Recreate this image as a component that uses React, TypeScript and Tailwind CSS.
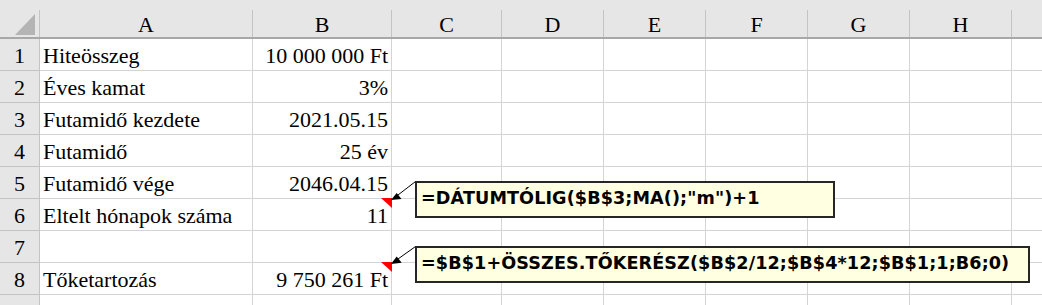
import React from "react";

const colWidths = [213, 139, 110, 102, 102, 102, 102, 102];
const colLetters = ["A", "B", "C", "D", "E", "F", "G", "H"];

type Row = { n: number; a?: string; b?: string };

const rows: Row[] = [
  { n: 1, a: "Hiteösszeg", b: "10 000 000 Ft" },
  { n: 2, a: "Éves kamat", b: "3%" },
  { n: 3, a: "Futamidő kezdete", b: "2021.05.15" },
  { n: 4, a: "Futamidő", b: "25 év" },
  { n: 5, a: "Futamidő vége", b: "2046.04.15" },
  { n: 6, a: "Eltelt hónapok száma", b: "11" },
  { n: 7 },
  { n: 8, a: "Tőketartozás", b: "9 750 261 Ft" },
  { n: 9 },
];

function HeaderRow() {
  return (
    <div className="flex h-[39px] bg-[#e6e6e6] border-b-2 border-[#a8a8a8] pt-[10px]">
      <div className="w-[40px] shrink-0 border-r border-[#c4c4c4] flex items-end justify-end pr-[4px] pb-[2px]">
        <svg width="20" height="21" viewBox="0 0 20 21">
          <polygon points="20,0 20,21 0,21" fill="#b4b4b4" />
        </svg>
      </div>
      {colWidths.map((w, i) => (
        <div
          key={colLetters[i]}
          style={{ width: w }}
          className="shrink-0 border-r border-[#c4c4c4] flex items-end justify-center leading-[25px]"
        >
          {colLetters[i]}
        </div>
      ))}
      <div className="flex-1" />
    </div>
  );
}

function SheetRow({ row }: { row: Row }) {
  return (
    <div className="flex h-[32px]">
      <div className="w-[40px] shrink-0 bg-[#e6e6e6] border-r border-b border-[#c4c4c4] flex items-end justify-center pb-[2px] leading-[25px]">
        {row.n}
      </div>
      {colWidths.map((w, i) => (
        <div
          key={i}
          style={{ width: w }}
          className={
            "shrink-0 border-r border-b border-[#d4d4d4] flex items-end px-[3px] pb-[2px] leading-[25px] whitespace-nowrap " +
            (i === 1 ? "justify-end" : "justify-start")
          }
        >
          {i === 0 ? row.a : i === 1 ? row.b : null}
        </div>
      ))}
      <div className="flex-1 border-b border-[#d4d4d4]" />
    </div>
  );
}

function CommentBox({
  text,
  className,
}: {
  text: string;
  className: string;
}) {
  return (
    <div
      className={
        "absolute h-[37px] bg-[#ffffe1] border-2 border-[#262626] pl-[4px] pt-[3px] font-['DejaVu_Sans'] font-bold text-[17.6px] tracking-[0.1px] leading-[24px] text-black whitespace-nowrap " +
        className
      }
    >
      {text}
    </div>
  );
}

export default function App() {
  return (
    <div className="relative w-[1042px] h-[305px] overflow-hidden bg-white text-black font-['Liberation_Serif',serif] text-[22px]">
      <HeaderRow />
      {rows.map((r) => (
        <SheetRow key={r.n} row={r} />
      ))}

      {/* comment indicators and connector arrows */}
      <svg
        className="absolute inset-0 pointer-events-none"
        width="1042"
        height="305"
        viewBox="0 0 1042 305"
      >
        <polygon points="381,198 392,198 392,208" fill="#ff0000" />
        <polygon points="381,262 392,262 392,272" fill="#ff0000" />
        <line x1="415.5" y1="181.5" x2="398" y2="195" stroke="#000" strokeWidth="1" />
        <polygon points="391,200 396.7,193 401.5,199" fill="#000" />
        <line x1="415.5" y1="246.5" x2="398" y2="259" stroke="#000" strokeWidth="1" />
        <polygon points="391,264 396.7,256.5 401.7,262.7" fill="#000" />
      </svg>

      <CommentBox
        text={'=DÁTUMTÓLIG($B$3;MA();"m")+1'}
        className="left-[415px] top-[181px] w-[420px]"
      />
      <CommentBox
        text="=$B$1+ÖSSZES.TŐKERÉSZ($B$2/12;$B$4*12;$B$1;1;B6;0)"
        className="left-[415px] top-[246px] w-[615px]"
      />
    </div>
  );
}
